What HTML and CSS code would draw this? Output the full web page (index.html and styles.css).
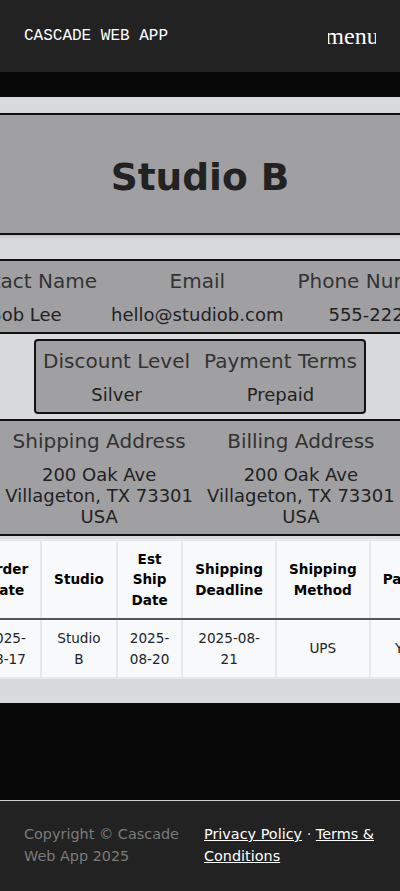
FILE: index.html
```html
<!DOCTYPE html>
<html lang="en">
<head>
<meta charset="utf-8">
<title>Studio B</title>
<link rel="stylesheet" href="styles.css">
</head>
<body>
<header class="topbar">
  <div class="brand">CASCADE WEB APP</div>
  <div class="menu-btn"><span>menu</span></div>
</header>
<main class="page">
  <section class="panel">
    <div class="stack">
      <div class="title-card"><h1>Studio B</h1></div>
      <div class="info-card">
        <div class="field"><div class="field-label">Contact Name</div><div class="field-value">Bob Lee</div></div>
        <div class="field"><div class="field-label">Email</div><div class="field-value">hello@studiob.com</div></div>
        <div class="field"><div class="field-label">Phone Number</div><div class="field-value">555-2222</div></div>
      </div>
      <div class="info-card rounded">
        <div class="field"><div class="field-label">Discount Level</div><div class="field-value">Silver</div></div>
        <div class="field"><div class="field-label">Payment Terms</div><div class="field-value">Prepaid</div></div>
      </div>
      <div class="info-card last">
        <div class="field"><div class="field-label">Shipping Address</div><div class="field-value">200 Oak Ave<br>Villageton, TX 73301<br>USA</div></div>
        <div class="field"><div class="field-label">Billing Address</div><div class="field-value">200 Oak Ave<br>Villageton, TX 73301<br>USA</div></div>
      </div>
      <table class="orders">
        <thead>
          <tr>
            <th>Order Date</th>
            <th>Studio</th>
            <th>Est Ship Date</th>
            <th>Shipping Deadline</th>
            <th>Shipping Method</th>
            <th>Paid</th>
          </tr>
        </thead>
        <tbody>
          <tr>
            <td>2025-08-17</td>
            <td>Studio B</td>
            <td>2025-08-20</td>
            <td>2025-08-21</td>
            <td>UPS</td>
            <td>Y</td>
          </tr>
        </tbody>
      </table>
    </div>
  </section>
</main>
<footer class="footer">
  <div class="copyright">Copyright © Cascade Web App 2025</div>
  <div class="links"><a href="#">Privacy Policy</a> · <a href="#">Terms &amp; Conditions</a></div>
</footer>
</body>
</html>
```
FILE: styles.css
```css
* { box-sizing: border-box; }

body {
  margin: 0;
  background: #080808;
  font-family: "DejaVu Sans", sans-serif;
}

.topbar {
  height: 72px;
  background: #222222;
  display: flex;
  align-items: center;
  justify-content: space-between;
  padding: 0 24px;
}

.brand {
  font-family: "Liberation Mono", monospace;
  font-size: 16px;
  color: #ffffff;
}

.menu-btn {
  width: 48px;
  height: 48px;
  display: flex;
  align-items: center;
  justify-content: center;
  overflow: hidden;
  font-family: "Liberation Serif", serif;
  font-size: 24px;
  color: #ffffff;
}

.menu-btn span { flex: none; }

.page {
  padding: 25px 0 97px;
}

.panel {
  background: #d9dadc;
  padding: 16px 0 24px;
  display: flex;
  justify-content: center;
  overflow: hidden;
}

.stack {
  flex: none;
  display: flex;
  flex-direction: column;
  align-items: center;
}

.title-card {
  align-self: stretch;
  background: #a0a0a2;
  border: 2px solid #111111;
  text-align: center;
  padding: 39px 0 33px;
  margin-bottom: 24px;
  box-shadow: 0 2px 4px rgba(0, 0, 0, 0.12);
}

.title-card h1 {
  margin: 0;
  font-size: 37.5px;
  line-height: 46px;
  font-weight: bold;
  color: #222222;
}

.info-card {
  display: flex;
  background: #a0a0a2;
  border: 2px solid #111111;
  padding: 8px 0 7px;
  margin-bottom: 5px;
}

.info-card.rounded { border-radius: 4px; }

.info-card.last { margin-bottom: 0; }

.field {
  padding: 0 7px;
  text-align: center;
  white-space: nowrap;
}

.field-label {
  font-size: 20px;
  color: #333333;
  margin-bottom: 11px;
}

.field-value {
  font-size: 18px;
  color: #222222;
}

.orders {
  width: min-content;
  margin-top: 3px;
  border-collapse: collapse;
  font-size: 13.6px;
  line-height: 1.5;
  color: #212529;
}

.orders th,
.orders td {
  background: #f8f9fa;
  border: 2px solid #e6e8eb;
  padding: 8px 12px;
  text-align: center;
  vertical-align: middle;
}

.orders th {
  font-weight: bold;
  color: #000000;
  border-bottom: 2px solid #555555;
}

.footer {
  border-top: 1px solid #d0d0d0;
  background: #222222;
  padding: 23px 20px 24px 24px;
  display: grid;
  grid-template-columns: 170px 1fr;
  column-gap: 10px;
  font-size: 14.4px;
  line-height: 1.5;
}

.copyright { color: #7b7b7b; }

.links { color: #dddddd; }

.links a {
  color: #ffffff;
  text-decoration: underline;
}
```
